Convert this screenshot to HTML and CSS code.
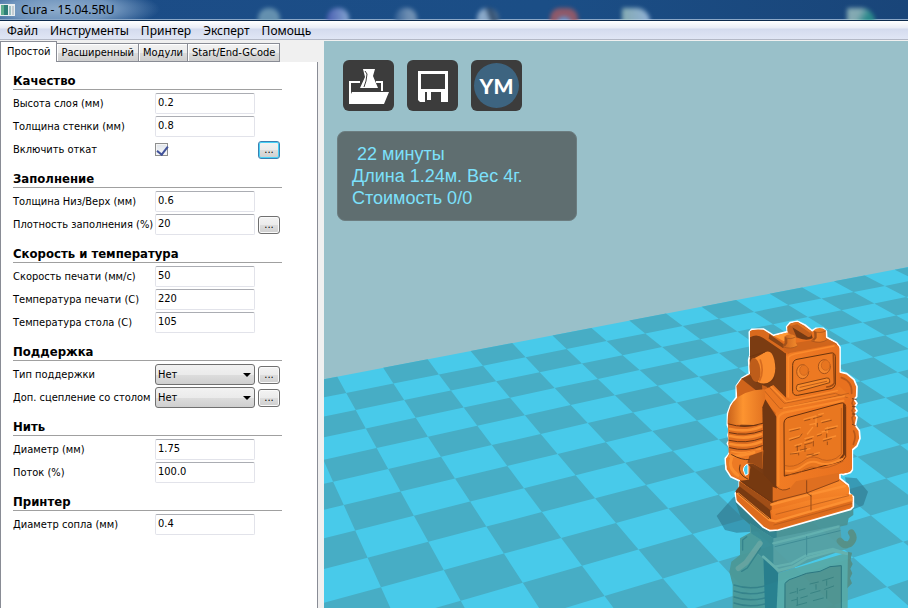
FILE: index.html
```
<!DOCTYPE html>
<html lang="ru">
<head>
<meta charset="utf-8">
<title>Cura - 15.04.5RU</title>
<link rel="stylesheet" href="styles.css">
</head>
<body>
<header class="titlebar">
  <svg class="app-icon" viewBox="0 0 15 12" aria-hidden="true">
    <rect x="0" y="0" width="15" height="12" fill="#e8edf0"/>
    <rect x="1" y="1" width="7" height="10" fill="#2f7f78"/>
    <rect x="1" y="1" width="3" height="10" fill="#5fae8e"/>
    <rect x="9" y="2" width="2" height="9" fill="#9fc0c4"/>
    <rect x="12" y="2" width="2" height="9" fill="#c4ccd2"/>
  </svg>
  <h1 class="title">Cura - 15.04.5RU</h1>
  <span class="glass" aria-hidden="true">
    <i class="blob teal"></i><i class="blob violet"></i><i class="blob grey"></i><i class="blob pale"></i><i class="blob red"></i><i class="blob mint"></i><i class="blob green"></i>
  </span>
</header>
<nav class="menubar">
  <a href="#">Файл</a><a href="#">Инструменты</a><a href="#">Принтер</a><a href="#">Эксперт</a><a href="#">Помощь</a>
</nav>
<main class="workspace">
  <section class="sidebar">
    <div class="tabs" role="tablist">
      <button class="tab active" role="tab" aria-selected="true">Простой</button>
      <button class="tab" role="tab">Расширенный</button>
      <button class="tab" role="tab">Модули</button>
      <button class="tab" role="tab">Start/End-GCode</button>
    </div>
    <form class="panel">
      <section class="group">
        <h2>Качество</h2>
        <div class="row"><label for="layer">Высота слоя (мм)</label><input class="field" id="layer" type="text" value="0.2"></div>
        <div class="row"><label for="wall">Толщина стенки (мм)</label><input class="field" id="wall" type="text" value="0.8"></div>
        <div class="row"><label for="retract">Включить откат</label><input class="check" id="retract" type="checkbox" checked><button class="more focused" type="button">...</button></div>
      </section>
      <section class="group">
        <h2>Заполнение</h2>
        <div class="row"><label for="topbottom">Толщина Низ/Верх (мм)</label><input class="field" id="topbottom" type="text" value="0.6"></div>
        <div class="row"><label for="density">Плотность заполнения (%)</label><input class="field" id="density" type="text" value="20"><button class="more" type="button">...</button></div>
      </section>
      <section class="group">
        <h2>Скорость и температура</h2>
        <div class="row"><label for="speed">Скорость печати (мм/с)</label><input class="field" id="speed" type="text" value="50"></div>
        <div class="row"><label for="temp">Температура печати (C)</label><input class="field" id="temp" type="text" value="220"></div>
        <div class="row"><label for="bed">Температура стола (C)</label><input class="field" id="bed" type="text" value="105"></div>
      </section>
      <section class="group">
        <h2>Поддержка</h2>
        <div class="row"><label for="support">Тип поддержки</label><span class="combo"><select id="support"><option>Нет</option></select></span><button class="more" type="button">...</button></div>
        <div class="row"><label for="adhesion">Доп. сцепление со столом</label><span class="combo"><select id="adhesion"><option>Нет</option></select></span><button class="more" type="button">...</button></div>
      </section>
      <section class="group">
        <h2>Нить</h2>
        <div class="row"><label for="diameter">Диаметр (мм)</label><input class="field" id="diameter" type="text" value="1.75"></div>
        <div class="row"><label for="flow">Поток (%)</label><input class="field" id="flow" type="text" value="100.0"></div>
      </section>
      <section class="group">
        <h2>Принтер</h2>
        <div class="row"><label for="nozzle">Диаметр сопла (мм)</label><input class="field" id="nozzle" type="text" value="0.4"></div>
      </section>
    </form>
  </section>
  <section class="viewport">
    <svg class="scene" viewBox="0 0 584 567" preserveAspectRatio="xMinYMin slice" aria-hidden="true">
      <defs>
        <linearGradient id="front" x1="0" y1="0" x2="1" y2="0"><stop offset="0" stop-color="#f17c24"/><stop offset="1" stop-color="#e8711f"/></linearGradient>
        <linearGradient id="side" x1="0" y1="0" x2="1" y2="0"><stop offset="0" stop-color="#8a4416"/><stop offset="1" stop-color="#6b3410"/></linearGradient>
        <linearGradient id="arm" x1="0" y1="0" x2="1" y2="0"><stop offset="0" stop-color="#c9621b"/><stop offset=".4" stop-color="#fd9430"/><stop offset="1" stop-color="#e0701f"/></linearGradient>
        <linearGradient id="bevel" x1="0" y1="0" x2="0" y2="1"><stop offset="0" stop-color="#f98a2c"/><stop offset="1" stop-color="#ea731f"/></linearGradient>
      </defs>
      <path id="floor" fill="#48caea"/>
      <path id="tiles" fill="#47adc5"/>
      <g transform="translate(386 269) scale(.33333)" stroke-linejoin="round" stroke-linecap="round">
        <path fill="#286a80" fill-opacity=".5" d="M20 618L70 562L120 550L180 662L80 668L45 660ZM405 502L440 505L474 545L460 586L425 600Z"/>
        <!-- mirror image in the build plate -->
        <g opacity=".92">
          <path fill="#4b9294" d="M76 575L170 655L430 592L430 615L416 625L412 645L205 690L165 680L92 620V600Z"/>
          <path fill="#33818c" d="M76 575L170 655L200 662V690L165 680L92 620Z"/>
          <path fill="#579fa1" d="M120 640L190 685L390 645L395 690L415 715L205 790L160 760L120 720Z"/>
          <path fill="#3b8b92" d="M120 640L190 685V768L130 720Z"/>
          <path fill="none" stroke="#66b0ad" stroke-width="7" d="M190 700L285 677L385 650M195 770L245 760L290 735L370 717L410 730"/>
          <path fill="none" stroke="#3f8990" stroke-width="3" d="M290 680V735M195 710L390 662"/>
          <path fill="#4c9896" d="M90 685L120 668L155 690L140 730L165 750V894H68V825L58 785L64 755L90 735Z"/>
          <path fill="none" stroke="#68a39d" stroke-width="16" d="M150 700L108 758L85 775"/>
          <path fill="none" stroke="#347f86" stroke-width="4" d="M152 714L112 774L95 784M110 680L98 690V720M72 825Q115 840 165 828M72 843Q115 858 165 846M72 861Q115 876 165 864M72 879Q115 894 165 882"/>
          <path fill="#267b89" d="M160 735L205 790V894H165Z"/>
          <path fill="#58aaa7" d="M205 790L415 727L413 894H200Z"/>
          <path fill="none" stroke="#68b1ac" stroke-width="8" d="M160 740L205 781L250 770L290 745L370 723L414 732"/>
          <path fill="#51938e" d="M225 825Q225 810 245 807L290 790L330 785L360 770L394 766V894H222Z"/>
          <path fill="none" stroke="#29717a" stroke-width="3" d="M225 894V820Q235 807 255 803L290 790L330 784L360 770L394 767V894"/>
          <g fill="none" stroke="#377d7b" stroke-width="3"><path d="M240 850L258 845M268 841L285 836M300 822L325 816M338 812L370 802M245 872L260 868M272 864L292 858M302 850L330 842M344 838L371 828M262 835V850M262 862V886M318 824V838M350 812V826M350 842V865M260 886L290 878M310 872L340 864"/></g>
          <path fill="none" stroke="#588f83" stroke-width="20" d="M390 693Q402 710 420 701Q437 684 424 668"/>
          <path fill="#538e86" d="M414 725L426 728L422 750L428 762L421 776L427 790L420 805L426 820L412 835Z"/>
        </g>
        <!-- selected model -->
        <path fill="#e8711f" stroke="#fff" stroke-width="5" d="M118 66L125 58L160 57L178 68L190 76L232 65L230 50L240 38L262 34L285 45L306 62L318 55H340L349 64L350 82L380 98L390 112V186L410 191L432 209L441 230L440 260L433 268L441 280L434 291L441 302L434 312L441 322L436 346L448 362L450 385L441 408L427 420V480L422 487L400 494L390 490V505L415 525L418 550L430 560V590L422 598L205 660L180 662L160 652L80 575L76 550L88 535V512L62 500L48 478L46 445L55 434L62 420L52 400L58 390L54 375L58 360L52 345L53 310L62 285L79 262V228L95 205L118 191L116 150L120 135Z"/>
        <path fill="#d0641b" d="M79 228L95 206L120 192L170 220L220 255L225 300L195 310L160 280L110 250L82 260Z"/>
        <path fill="url(#side)" d="M94 206L120 195L188 220L228 270L215 292L165 262L130 235Z"/>
        <path fill="#7b3c12" d="M120 66L160 80L228 128V268L185 228L120 192Z"/>
        <path fill="#d96a1d" d="M120 64Q128 56 160 59L240 110L380 102Q384 110 374 116L240 132Q226 134 218 124L160 84Q140 70 120 82Z"/>
        <path fill="#d0651c" d="M223 104L345 84L378 100Q386 108 374 114L240 132L222 122Z"/>
        <path fill="#8b4516" d="M178 72L190 81L223 104L220 115L176 86Z"/>
        <path fill="#ff9934" d="M192 78L230 68L257 83L222 94Z"/>
        <path fill="#c3601d" d="M232 64V50Q244 35 264 37L304 64L308 86L279 88L250 82Z"/>
        <path fill="#743a14" d="M247 52L294 81Q305 82 304 72L308 84Q290 95 260 82Z"/>
        <path fill="none" stroke="#e17422" stroke-width="6" d="M243 44L262 39L300 65"/>
        <path fill="url(#arm)" d="M224 79Q240 66 257 79V98L263 108Q240 121 218 108L224 99ZM312 60Q330 48 347 61V81L353 90Q329 101 305 91L313 82Z"/>
        <path fill="#a3511a" d="M224 82L232 86V100L226 108L218 108L224 99ZM312 64L320 67V84L313 92L305 91L313 82Z"/>
        <path fill="none" stroke="#9f501b" stroke-width="2" d="M225 82Q240 91 256 81M312 64Q330 72 347 63M219 110Q242 120 262 108M305 93Q332 103 352 89"/>
        <path fill="url(#front)" d="M228 138L240 129L374 103Q386 104 388 116V226Q379 242 360 245L245 267Q230 268 228 254Z"/>
        <path fill="none" stroke="#fb8a2c" stroke-width="5" d="M235 260V142Q240 135 254 132L372 108"/>
        <path fill="#ed7922" stroke="#69330d" stroke-width="3" d="M248 165Q248 151 261 148L363 129Q375 127 376 140V224Q373 233 364 236L263 256Q249 257 248 246Z"/>
        <path fill="none" stroke="#a14b12" stroke-width="5" d="M370 133L373 218Q370 228 350 231"/>
        <g fill="#f4872c" stroke="#a6521a" stroke-width="3">
          <ellipse cx="278" cy="185" rx="18" ry="21"/><ellipse cx="343" cy="170" rx="18" ry="21"/>
          <ellipse cx="282" cy="181" rx="13" ry="15" fill="#e77520" stroke="#d0681e"/><ellipse cx="347" cy="166" rx="13" ry="15" fill="#e77520" stroke="#d0681e"/>
        </g>
        <path fill="#f98b2a" stroke="#8a4413" stroke-width="3" d="M263 224L350 204Q359 202 359 212V218L270 243Q259 245 259 234Z"/>
        <path fill="none" stroke="#b95b1c" stroke-width="3" d="M270 232L350 214"/>
        <path fill="#713610" d="M130 145L170 125L196 160L193 210L165 225L138 216Z"/>
        <path fill="#f98c2e" d="M130 146L165 127Q185 117 193 150Q202 193 182 213Q165 227 143 216Z"/>
        <ellipse cx="135" cy="180" rx="16" ry="36" fill="#be5d1a" transform="rotate(-7 135 180)"/>
        <path fill="none" stroke="#713610" stroke-width="3" d="M120 140L164 126"/>
        <path fill="none" stroke="#d56b1f" stroke-width="5" d="M151 150Q163 184 149 212"/>
        <path fill="url(#side)" d="M150 240L165 268L200 320V538L165 500L88 448V350Z"/>
        <path fill="#c9611b" d="M156 225L170 230L225 292L222 315L195 320L160 285Z"/>
        <path fill="#ec7822" d="M190 225L235 270L375 239L387 228L420 257Q423 268 411 274L230 318Q208 322 198 310L160 270L156 243Z"/>
        <path fill="none" stroke="#c4611c" stroke-width="3" d="M178 232L223 280L376 250L414 264M164 243L210 296L416 250"/>
        <path fill="none" stroke="#fb8c2e" stroke-width="4" d="M184 230L229 275L382 242M220 294L404 258"/>
        <path fill="url(#front)" d="M197 310L220 300L405 265Q424 261 426 280V474Q423 489 405 489L260 514Q247 533 231 540Q208 545 197 527Z"/>
        <path fill="none" stroke="#fa892b" stroke-width="7" d="M205 525V324Q207 314 222 308L400 272"/>
        <path fill="#e97720" stroke="#682f0c" stroke-width="3" d="M222 338Q223 324 240 321L390 280Q405 275 407 290V440Q403 450 390 455L224 498Z"/>
        <path fill="none" stroke="#793910" stroke-width="6" d="M402 284V433L392 446"/>
        <path fill="none" stroke="#c4601b" stroke-width="3" d="M394 295V432L378 445Q350 458 325 444Q300 434 275 457Q250 474 226 467"/>
        <path fill="none" stroke="#fb8c2e" stroke-width="6" d="M228 482Q255 487 279 468Q303 449 327 459Q353 469 397 447"/>
        <path fill="none" stroke="#b1561a" stroke-width="2" d="M226 493Q260 498 285 478Q303 467 324 473Q350 480 399 454"/>
        <g fill="none" stroke="#fb8f31" stroke-width="4"><path d="M282 328L318 318M326 314L340 310M334 334L358 328M238 360L271 353M238 387L270 378M300 344L318 340M285 386L310 379M322 374L332 371M346 356L382 348M255 407L275 401M284 398L308 391M340 388L377 378M263 425L300 416M243 431L267 425M291 439L328 428M318 318V346M308 352L292 372M352 352V368M336 366L350 362"/></g>
        <g fill="none" stroke="#7d3d13" stroke-width="2"><path d="M284 332L300 328M310 326L336 318M240 364L268 357M240 391L268 382M336 338L364 331M322 340V350M288 391L306 385M322 378L334 374M346 361L378 353M350 372V382M340 393L364 386M352 396V404M258 411L272 407M284 404L306 398M262 408V422M241 432L262 430M266 429V435M285 408V424M310 394V408M271 420L290 416M291 435L310 432M306 438L324 433M276 372L270 380"/></g>
        <path fill="url(#arm)" d="M163 240L168 284L159 346L53 343Q51 300 70 275Q102 240 163 238Z"/>
        <path fill="#713711" d="M157 292L166 268L199 320V532L161 495Z"/>
        <path fill="#dd6d20" d="M54 343Q105 360 159 341V430Q105 447 56 430Z"/>
        <g fill="none" stroke="#fb8f30" stroke-width="8"><path d="M60 357Q110 368 153 350M60 378Q110 390 153 373M61 402Q110 413 153 395M65 426Q110 435 150 417"/></g>
        <g fill="none" stroke="#6b3210" stroke-width="3"><path d="M56 342Q103 357 158 340M58 368Q108 380 157 362M57 391Q108 403 157 384M59 413Q108 427 157 407"/></g>
        <path fill="#ed7a24" d="M61 424Q92 440 130 421H160L157 476L130 461Q101 456 99 486Q105 501 118 505L109 513L77 503Q48 485 48 449Z"/>
        <path fill="#9b4b16" d="M118 438L158 424L157 478L130 461L112 458Z"/>
        <path fill="#48caea" stroke="#fff" stroke-width="3" d="M112 463Q102 465 100 480L106 496L114 492V471Z"/>
        <path fill="none" stroke="#fb8e2f" stroke-width="9" d="M60 439Q102 437 132 427M65 444Q52 473 84 496"/>
        <path fill="none" stroke="#6e3510" stroke-width="3" d="M65 434Q95 451 118 449M90 465Q80 492 113 507"/>
        <path fill="none" stroke="#ba5819" stroke-width="5" d="M394 203Q428 214 425 250M430 269L426 280L432 291L426 302L433 313L426 323L430 340M431 363Q440 378 430 403"/>
        <path fill="none" stroke="#793a12" stroke-width="3" d="M427 266L438 268M427 290H436M427 312H436M427 343L436 347"/>
        <path fill="#763910" d="M122 465L158 492L200 533V607L184 593L91 512L116 509Z"/>
        <path fill="#df6f20" d="M188 530L214 541L238 537L258 514L387 488V530L298 558L188 576Z"/>
        <path fill="url(#bevel)" d="M88 514L185 579L295 548L389 512L412 526Q421 533 416 551L398 557L190 614L88 535Z"/>
        <path fill="#a04e17" d="M88 514L185 579V606L180 600L88 532Z"/>
        <path fill="#783a11" d="M88 529L180 599L184 632L80 552L76 544Z"/>
        <path fill="url(#bevel)" d="M183 600L300 570L427 553V576L193 635Z"/>
        <path fill="#dd6c1d" d="M78 548L181 626L194 638L425 574V589L205 655Q181 663 163 650L80 570Z"/>
        <path fill="none" stroke="#fc9032" stroke-width="7" d="M184 584L298 554L405 528M84 551L179 630L197 634L423 569"/>
        <path fill="none" stroke="#6b3210" stroke-width="2" d="M91 512L184 576L290 549L386 512M86 552L176 626M303 555V600M290 512V548L303 558M239 535Q216 548 199 530"/>
        <path fill="none" stroke="#b1561a" stroke-width="2" d="M198 613L416 557M192 645L425 581"/>
      </g>
    </svg>
    <div class="hud">
      <div class="tools">
        <button class="tool" aria-label="Загрузить">
          <svg viewBox="0 0 51 51"><path fill="none" stroke="#fff" stroke-width="2" d="M17 22H7V43M33 22H39V31"/><path fill="#fff" d="M9 32H46L41 44H6V38ZM20 9H32L30 16L35 28H17L22 17Z"/><path fill="none" stroke="#3c3c3c" d="M22 11L24 14L23 21L21 27"/></svg>
        </button>
        <button class="tool" aria-label="Сохранить">
          <svg viewBox="0 0 51 51"><path fill="#fff" fill-rule="evenodd" d="M11 11H41V42H34V32H18V42H13L11 40ZM14 14V29H38V14Z"/><path fill="#fff" d="M20 32H24V40H20Z"/></svg>
        </button>
        <button class="tool" aria-label="YouMagine"><span class="ym">YM</span></button>
      </div>
      <div class="info"><p class="time">22 минуты</p><p>Длина 1.24м. Вес 4г.</p><p>Стоимость 0/0</p></div>
    </div>
  </section>
</main>
<script src="scene.js"></script>
</body>
</html>
```
FILE: styles.css
```
* { box-sizing: border-box; }
body {
  margin: 0;
  min-height: 100vh;
  display: flex;
  flex-direction: column;
  background: #f0f0f0;
  color: #000;
  font: 11px/14px "DejaVu Sans Condensed", "Noto Sans", sans-serif;
}
h1, h2, p { margin: 0; }
button, input, select { font: inherit; color: inherit; margin: 0; }

.titlebar {
  position: relative;
  display: flex;
  align-items: center;
  gap: 6px;
  height: 21px;
  overflow: hidden;
  background: radial-gradient(ellipse 100px 22px at 60px 9px, #8eaccb, #6f94bd 55%, transparent), linear-gradient(90deg, #1c4c87, #1b4e86 60%, #194579);
  border-bottom: 1px solid #0d2a4c;
  box-shadow: inset 0 -1px #8ba8c8;
}
.app-icon { width: 15px; height: 12px; }
.title { font: 12px/16px "Noto Sans", "Open Sans", sans-serif; }
.blob {
  position: absolute;
  top: 8px;
  width: 22px;
  height: 16px;
  border-radius: 10px 10px 0 0;
  filter: blur(2px);
  opacity: .75;
}
.teal { left: 258px; background: #7da7bd; }
.violet { left: 327px; background: linear-gradient(90deg, #5a65c0, #a8c4ea); }
.grey { left: 395px; background: linear-gradient(90deg, #3d689b, #8aa5c2 60%); }
.pale { left: 477px; background: linear-gradient(70deg, #b0c8e0 45%, #34475e 60%, #7896b5); }
.red { left: 550px; width: 28px; background: radial-gradient(circle at 50% 100%, #7fa6df 30%, #b65d60 40%); }
.mint { left: 622px; width: 28px; border-radius: 2px 14px 0 0; background: linear-gradient(90deg, #a9cbc2, #b8d3f3); }
.green { left: 847px; width: 28px; border-radius: 2px 14px 0 0; background: linear-gradient(120deg, #a7cbc5 40%, #2f9f91 70%); }

.menubar {
  display: flex;
  gap: 12px;
  height: 20px;
  padding: 0 7px;
  background: linear-gradient(#fff, #e9edf6 7px, #d4dbee 8px, #e0e6f5 18px);
  border-bottom: 1px solid #f0f0f0;
  box-shadow: inset 0 -1px #b3b8c6;
}
.menubar a {
  color: #000;
  text-decoration: none;
  font: 12px/20px "Noto Sans", "Open Sans", sans-serif;
}

.workspace { flex: 1; display: grid; grid-template-columns: 324px 1fr; }
.sidebar { display: flex; flex-direction: column; padding-right: 6px; }
.tabs { display: flex; align-items: flex-end; height: 21px; }
.tab {
  height: 19px;
  padding: 0 4px;
  border: 1px solid #898c95;
  border-left-width: 0;
  background: linear-gradient(#f2f2f2, #ebebeb 50%, #dcdcdc 51%, #cfcfcf);
  line-height: 16px;
  white-space: nowrap;
  box-shadow: inset 1px 1px #fff;
}
.tab.active {
  height: 21px;
  padding: 0 6px;
  border-left-width: 1px;
  border-bottom: 0;
  background: #fff;
}
.panel {
  flex: 1;
  padding: 9px 35px 0 12px;
  background: #fff;
  border-left: 1px solid #898c95;
  border-right: 1px solid #898c95;
}
.group { margin-bottom: 9px; }
.group h2 {
  height: 19px;
  margin-bottom: 3px;
  border-bottom: 1px solid #a0a0a0;
  font-size: 13px;
  line-height: 19px;
}
.row {
  display: grid;
  grid-template-columns: 139px 100px 22px;
  column-gap: 3px;
  align-items: center;
  height: 21px;
  margin-bottom: 2px;
}
.row label { white-space: nowrap; }
.field {
  width: 100%;
  height: 21px;
  padding: 0 2px 2px;
  border: 1px solid #e2e3ea;
  border-top-color: #abadb3;
  border-radius: 2px;
  background: #fff;
}
.check {
  appearance: none;
  width: 13px;
  height: 13px;
  border: 1px solid #8e8f8f;
  background: linear-gradient(#dfe4ea, #f8f9fb);
  box-shadow: inset 0 0 0 1px #f4f4f4;
  position: relative;
}
.check:checked::after {
  content: "";
  position: absolute;
  left: 3px;
  top: 0;
  width: 5px;
  height: 9px;
  border: solid #41529a;
  border-width: 0 2px 2px 0;
  transform: rotate(38deg);
}
.more {
  height: 18px;
  padding: 0;
  border: 1px solid #707070;
  border-radius: 3px;
  background: linear-gradient(#f3f3f3, #ebebeb 50%, #dddddd 51%, #cfcfcf);
  line-height: 12px;
  box-shadow: inset 0 0 0 1px #fafafa;
}
.more.focused { border-color: #3c7fb1; box-shadow: inset 0 0 0 1px #46d1f7; }
.combo { position: relative; display: block; }
.combo::after {
  content: "";
  position: absolute;
  right: 4px;
  top: 9px;
  width: 8px;
  height: 4px;
  background: #000;
  clip-path: polygon(0 0, 100% 0, 50% 100%);
  pointer-events: none;
}
.combo select {
  appearance: none;
  display: block;
  width: 100%;
  height: 21px;
  padding: 0 2px;
  border: 1px solid #707070;
  border-radius: 3px;
  background: linear-gradient(#f2f2f2, #ebebeb 50%, #dddddd 51%, #cfcfcf);
}

.viewport { position: relative; overflow: hidden; background: #99c0c9; }
.scene { position: absolute; inset: 0; width: 100%; height: 100%; }
.hud { position: relative; padding: 19px 13px; }
.tools { display: flex; gap: 13px; padding-left: 6px; }
.tool {
  width: 51px;
  height: 51px;
  padding: 0;
  border: 0;
  border-radius: 6px;
  background: #3c3c3c;
}
.tool svg { display: block; width: 51px; height: 51px; }
.ym {
  display: block;
  width: 45px;
  height: 45px;
  margin: 0 auto;
  border-radius: 50%;
  background: #3d6480;
  color: #fff;
  font: 900 21px/45px Lato, sans-serif;
}
.info {
  width: 240px;
  margin-top: 20px;
  padding: 11px 14px;
  border: 1px solid #6c7d80;
  border-radius: 8px;
  background: #5f6e70;
  color: #7ce0fb;
  font: 18px/22px "Liberation Sans", Arial, sans-serif;
  white-space: nowrap;
}
.time { padding-left: 5px; }
```
FILE: scene.js
```
// Perspective projection of the build plate grid onto the view.
function project(i, j) {
  const w = 1 + 0.01718 * i - 0.02987 * j;
  const x = (46.963 * i + 8.262 * j + 13.27) / w;
  const y = (-3.205 * i + 5.682 * j + 335.667) / w;
  return x.toFixed(1) + " " + y.toFixed(1);
}

function quad(i0, j0, i1, j1) {
  return "M" + [project(i0, j0), project(i1, j0), project(i1, j1), project(i0, j1)].join("L") + "Z";
}

const I_MIN = -11, I_MAX = 24, J_MAX = 19;
let dark = "";
for (let j = 0; j < J_MAX; j++) {
  for (let i = I_MIN; i < I_MAX; i++) {
    if ((i + j) % 2 !== 0) dark += quad(i, j, i + 1, j + 1);
  }
}
document.getElementById("floor").setAttribute("d", quad(I_MIN, 0, I_MAX, J_MAX));
document.getElementById("tiles").setAttribute("d", dark);
```
